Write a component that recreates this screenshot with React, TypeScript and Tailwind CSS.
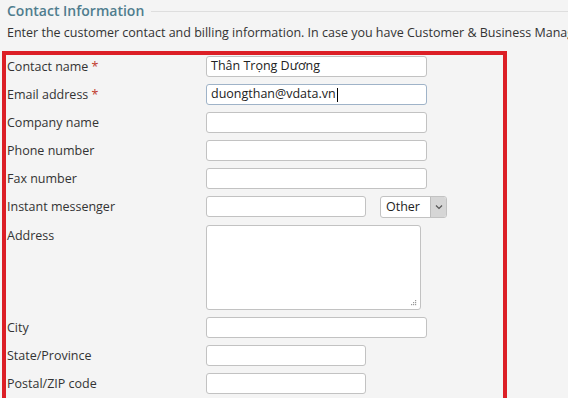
import React from 'react';

const font = { fontFamily: '"Open Sans", "Noto Sans", Arial, sans-serif' };

type Field = {
  label: string;
  required?: boolean;
  value?: string;
  width: 'full' | 'short';
  focused?: boolean;
  kind?: 'messenger' | 'textarea';
};

const fields: Field[] = [
  { label: 'Contact name', required: true, value: 'Thân Trọng Dương', width: 'full' },
  { label: 'Email address', required: true, value: 'duongthan@vdata.vn', width: 'full', focused: true },
  { label: 'Company name', width: 'full' },
  { label: 'Phone number', width: 'full' },
  { label: 'Fax number', width: 'full' },
  { label: 'Instant messenger', width: 'short', kind: 'messenger' },
  { label: 'Address', width: 'full', kind: 'textarea' },
  { label: 'City', width: 'full' },
  { label: 'State/Province', width: 'short' },
  { label: 'Postal/ZIP code', width: 'short' },
];

const TextBox = ({ field }: { field: Field }) => (
  <div
    className={`flex h-[21px] items-center rounded-[3px] border bg-white px-[4px] text-[12.5px] text-[#222] ${
      field.width === 'full' ? 'w-[221px]' : 'w-[160px]'
    } ${field.focused ? 'border-[#9fb3c8]' : 'border-[#c2c2c2]'}`}
  >
    {field.value}
    {field.focused && <span className="ml-px h-[14px] w-px bg-black" />}
  </div>
);

const MessengerSelect = () => (
  <div className="ml-[14px] flex h-[22px] w-[67px] items-stretch overflow-hidden rounded-[3px] border border-[#c2c2c2] bg-white">
    <span className="flex flex-1 items-center pl-[5px] text-[12.5px] text-[#222]">Other</span>
    <span className="flex w-[16px] items-center justify-center border-l border-[#bdbdbd] bg-[#d6d6d6]">
      <svg width="8" height="6" viewBox="0 0 8 6">
        <path d="M1 1.5 L4 4.5 L7 1.5" fill="none" stroke="#555" strokeWidth="1.2" />
      </svg>
    </span>
  </div>
);

const AddressArea = () => (
  <div className="relative h-[85px] w-[215px] rounded-[3px] border border-[#c2c2c2] bg-white">
    <svg className="absolute bottom-[3px] right-[3px]" width="7" height="7" viewBox="0 0 7 7">
      <rect x="5" y="1" width="1.2" height="1.2" fill="#999" />
      <rect x="3" y="3" width="1.2" height="1.2" fill="#999" />
      <rect x="5" y="3" width="1.2" height="1.2" fill="#999" />
      <rect x="1" y="5" width="1.2" height="1.2" fill="#999" />
      <rect x="3" y="5" width="1.2" height="1.2" fill="#999" />
      <rect x="5" y="5" width="1.2" height="1.2" fill="#999" />
    </svg>
  </div>
);

export default function App() {
  return (
    <div className="h-[398px] w-[568px] overflow-hidden bg-[#f4f4f4] text-[#333]" style={font}>
      {/* Section heading */}
      <div className="flex items-center pl-[7px] pt-[1px]">
        <h2 className="text-[14px] leading-[20px] font-semibold text-[#4f7d8e]">Contact Information</h2>
        <div className="ml-[7px] h-px flex-1 bg-[#dedede]" />
      </div>
      <p className="mt-[4px] whitespace-nowrap pl-[7px] text-[12.5px] leading-[16px] text-[#333]">
        Enter the customer contact and billing information. In case you have Customer &amp; Business Manager
      </p>

      {/* Highlighted form */}
      <div className="mt-[10px] ml-[2px] w-[505px] border-4 border-[#dc1f26] pt-[1px] pb-[10px]">
        <div className="flex flex-col gap-[7px]">
          {fields.map((f) => (
            <div key={f.label} className="grid grid-cols-[200px_1fr] items-start">
              <label className="pl-[1px] text-[12.5px] leading-[21px] text-[#333]">
                {f.label}
                {f.required && <span className="text-[#c0392b]"> *</span>}
              </label>
              <div className="flex items-start">
                {f.kind === 'textarea' ? (
                  <AddressArea />
                ) : (
                  <>
                    <TextBox field={f} />
                    {f.kind === 'messenger' && <MessengerSelect />}
                  </>
                )}
              </div>
            </div>
          ))}
        </div>
      </div>
    </div>
  );
}
